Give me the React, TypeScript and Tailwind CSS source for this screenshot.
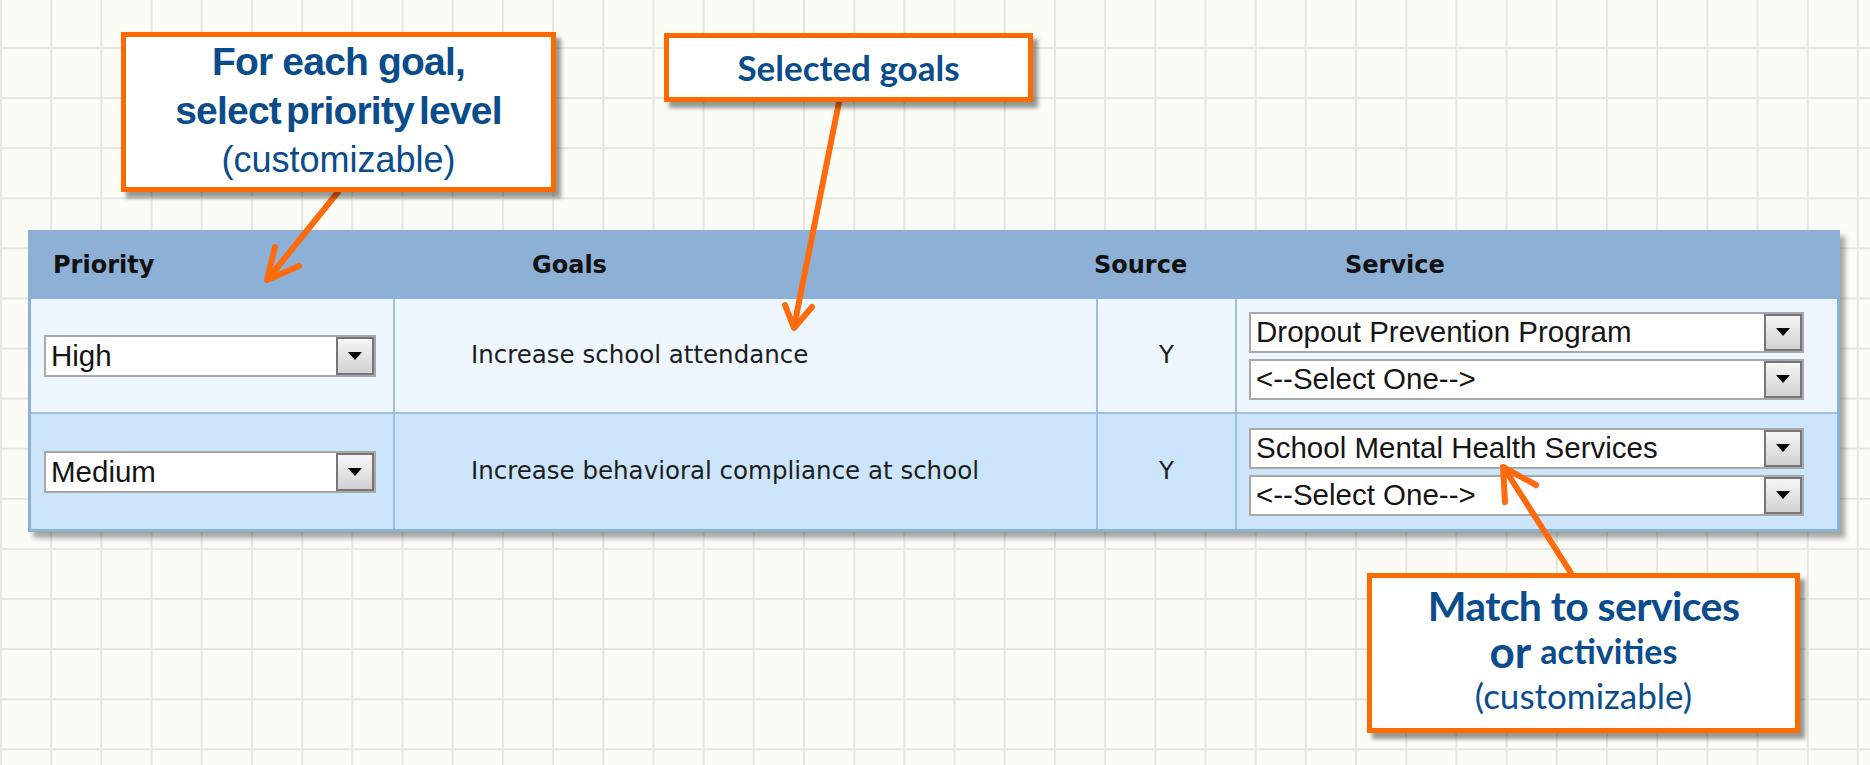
import React from "react";

function Select({ value, wide }: { value: string; wide?: boolean }) {
  return (
    <div
      className={
        wide
          ? "flex h-[41px] w-[555px] border-2 border-[#a8a8a8] bg-white"
          : "flex h-[42px] w-[332px] border-2 border-[#a8a8a8] bg-white"
      }
    >
      <div className="flex flex-1 items-center pl-[5px] font-['Liberation_Sans',Arial,sans-serif] text-[29.5px] leading-none text-[#151515]">
        {value}
      </div>
      <div className="flex w-[38px] items-center justify-center border-2 border-[#767676] bg-linear-to-b from-[#f6f6f6] to-[#d2d2d2]">
        <div className="h-0 w-0 border-t-[8px] border-r-[7px] border-l-[7px] border-t-black border-r-transparent border-l-transparent" />
      </div>
    </div>
  );
}

const headFont = "font-['DejaVu_Sans',Verdana,sans-serif] font-bold text-[24px] text-[#111]";
const bodyFont = "font-['DejaVu_Sans',Verdana,sans-serif] text-[24.5px] text-[#1d1d1d]";

function Row({
  priority,
  goal,
  service,
  bg,
  last,
}: {
  priority: string;
  goal: string;
  service: string;
  bg: string;
  last?: boolean;
}) {
  return (
    <div
      className={
        (last ? "" : "border-b-2 border-[#9fbfe2] ") +
        "grid h-[115px] grid-cols-[364px_703px_139px_1fr] " +
        bg
      }
    >
      <div className="flex items-center border-r-2 border-[#9fbfe2] pl-[13px]">
        <Select value={priority} />
      </div>
      <div className={"flex items-center border-r-2 border-[#9fbfe2] pl-[76px] " + bodyFont}>
        {goal}
      </div>
      <div className={"flex items-center justify-center border-r-2 border-[#9fbfe2] " + bodyFont}>
        Y
      </div>
      <div className="flex flex-col justify-center gap-[6px] pl-[12px]">
        <Select value={service} wide />
        <Select value="<--Select One-->" wide />
      </div>
    </div>
  );
}

export default function App() {
  return (
    <div className="relative h-[765px] w-[1870px] overflow-hidden bg-[#fcfcf7] [background-image:linear-gradient(to_right,#e6e6df_2px,transparent_2px),linear-gradient(to_bottom,#e6e6df_2px,transparent_2px)] [background-position:0px_47px] [background-size:50.2px_50.1px]">
      {/* Table */}
      <div className="pt-[230px] pl-[28px]">
        <div className="w-[1812px] bg-[#8db0d6] px-[3px] pb-[3px] shadow-[5px_6px_5px_rgba(0,0,0,0.35)]">
          <div className={"flex h-[69px] items-center pl-[22px] " + headFont}>
            <div className="w-[479px]">Priority</div>
            <div className="w-[562px]">Goals</div>
            <div className="w-[251px]">Source</div>
            <div>Service</div>
          </div>
          <Row
            priority="High"
            goal="Increase school attendance"
            service="Dropout Prevention Program"
            bg="bg-[#eef6ff]"
          />
          <Row
            priority="Medium"
            goal="Increase behavioral compliance at school"
            service="School Mental Health Services"
            bg="bg-[#cce5fb]"
            last
          />
        </div>
      </div>

      {/* Arrows */}
      <svg
        className="pointer-events-none absolute top-0 left-0"
        width="1870"
        height="765"
        viewBox="0 0 1870 765"
      >
        <g stroke="#ff6a0d" strokeWidth="6" fill="none" strokeLinecap="round" strokeLinejoin="round">
          <line x1="338" y1="192" x2="268" y2="279" />
          <polyline points="275,247 267,280 299,266" />
          <line x1="839" y1="102" x2="794" y2="327" />
          <polyline points="785,305 794,328 812,307" />
          <line x1="1571" y1="573" x2="1504" y2="468" />
          <polyline points="1505,502 1503,467 1536,485" />
        </g>
      </svg>

      {/* Callouts */}
      <div className="absolute top-[32px] left-[121px] flex h-[160px] w-[435px] flex-col items-center border-[5px] border-[#ff6a00] bg-white text-[#0b4c8c] shadow-[5px_6px_4px_rgba(0,0,0,0.4)]">
        <div className="font-['Liberation_Sans',Arial,sans-serif] text-[39px] leading-[49px] font-bold tracking-[-0.8px]">
          For each goal,
        </div>
        <div className="font-['Liberation_Sans',Arial,sans-serif] text-[39px] leading-[49px] font-bold tracking-[-0.8px] [word-spacing:-5px]">
          select priority level
        </div>
        <div className="font-['Liberation_Sans',Arial,sans-serif] text-[36px] leading-[49px]">
          (customizable)
        </div>
      </div>

      <div className="absolute top-[33px] left-[664px] flex h-[69px] w-[369px] items-center justify-center border-[5px] border-[#ff6a00] bg-white text-[#0b4c8c] shadow-[5px_6px_4px_rgba(0,0,0,0.4)]">
        <div className="font-['Lato',sans-serif] text-[35px] leading-none font-bold">Selected goals</div>
      </div>

      <div className="absolute top-[573px] left-[1367px] flex h-[160px] w-[433px] flex-col items-center border-[5px] border-[#ff6a00] bg-white pt-[5px] text-[#0b4c8c] shadow-[5px_6px_4px_rgba(0,0,0,0.4)]">
        <div className="h-[45px] font-['Lato',sans-serif] text-[41px] leading-[45px] font-bold tracking-[-0.6px]">
          Match to services
        </div>
        <div className="flex h-[45px] items-center gap-[9px] font-['Lato',sans-serif] font-bold">
          <span className="text-[44px] leading-none">or</span>
          <span className="text-[34px] leading-none">activities</span>
        </div>
        <div className="h-[45px] font-['Lato',sans-serif] text-[35px] leading-[45px]">(customizable)</div>
      </div>
    </div>
  );
}
